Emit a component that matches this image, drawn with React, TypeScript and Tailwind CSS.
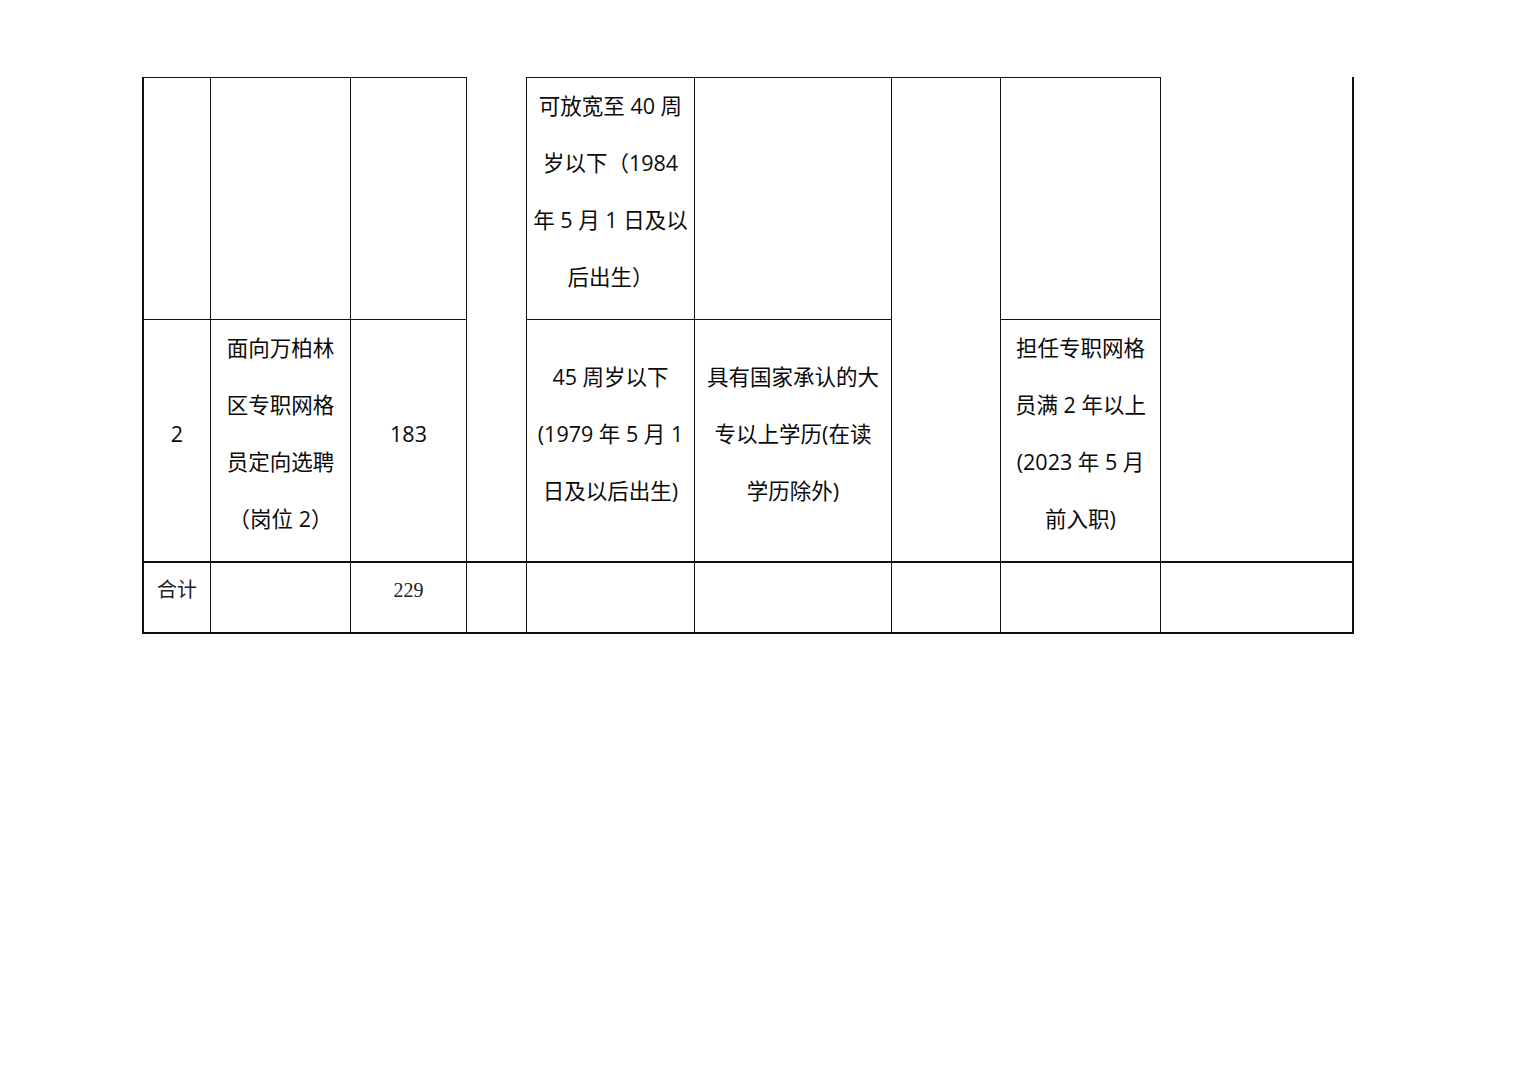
const line = "block whitespace-pre";

function Cell({
  className = "",
  lines = [],
  serif = false,
}: {
  className?: string;
  lines?: string[];
  serif?: boolean;
}) {
  return (
    <div
      className={`flex flex-col items-center justify-center pb-[15px] text-center border-[#111] ${className}`}
    >
      {lines.map((l, i) => (
        <span
          key={i}
          className={
            serif
              ? `${line} text-[20px] leading-[57px] text-[#222] font-['Liberation_Serif','Noto_Sans_CJK_SC',serif]`
              : `${line} text-[21.5px] leading-[57px] text-[#0a0a0a]`
          }
        >
          {l}
        </span>
      ))}
    </div>
  );
}

export default function App() {
  return (
    <main className="w-[1527px] h-[1080px] bg-white font-['Open_Sans','Noto_Sans_CJK_SC',sans-serif]">
      <div className="pt-[77px] pl-[142px]">
        <div className="grid grid-cols-[68px_140px_116px_60px_168px_197px_109px_160px_194px] grid-rows-[242px_242px_73px] w-[1212px]">
          {/* row 1 */}
          <Cell className="border-l-2 border-t-[1.5px]" />
          <Cell className="border-l-[1.5px] border-t-[1.5px]" />
          <Cell className="border-l-[1.5px] border-t-[1.5px]" />
          <Cell className="row-span-2 border-l-[1.5px]" />
          <Cell
            className="border-l-[1.5px] border-t-[1.5px]"
            lines={["可放宽至 40 周", "岁以下（1984", "年 5 月 1 日及以", "后出生）"]}
          />
          <Cell className="border-l-[1.5px] border-t-[1.5px]" />
          <Cell className="row-span-2 border-l-[1.5px] border-t-[1.5px]" />
          <Cell className="border-l-[1.5px] border-t-[1.5px]" />
          <Cell className="row-span-2 border-l-[1.5px] border-r-2" />

          {/* row 2 */}
          <Cell className="border-l-2 border-t-[1.5px]" lines={["2"]} />
          <Cell
            className="border-l-[1.5px] border-t-[1.5px]"
            lines={["面向万柏林", "区专职网格", "员定向选聘", "（岗位 2）"]}
          />
          <Cell className="border-l-[1.5px] border-t-[1.5px]" lines={["183"]} />
          <Cell
            className="border-l-[1.5px] border-t-[1.5px]"
            lines={["45 周岁以下", "(1979 年 5 月 1", "日及以后出生)"]}
          />
          <Cell
            className="border-l-[1.5px] border-t-[1.5px]"
            lines={["具有国家承认的大", "专以上学历(在读", "学历除外)"]}
          />
          <Cell
            className="border-l-[1.5px] border-t-[1.5px]"
            lines={["担任专职网格", "员满 2 年以上", "(2023 年 5 月", "前入职)"]}
          />

          {/* total row */}
          <Cell className="border-l-2 border-t-2 border-b-2" lines={["合计"]} serif />
          <Cell className="border-l-[1.5px] border-t-2 border-b-2" />
          <Cell className="border-l-[1.5px] border-t-2 border-b-2" lines={["229"]} serif />
          <Cell className="border-l-[1.5px] border-t-2 border-b-2" />
          <Cell className="border-l-[1.5px] border-t-2 border-b-2" />
          <Cell className="border-l-[1.5px] border-t-2 border-b-2" />
          <Cell className="border-l-[1.5px] border-t-2 border-b-2" />
          <Cell className="border-l-[1.5px] border-t-2 border-b-2" />
          <Cell className="border-l-[1.5px] border-t-2 border-b-2 border-r-2" />
        </div>
      </div>
    </main>
  );
}
